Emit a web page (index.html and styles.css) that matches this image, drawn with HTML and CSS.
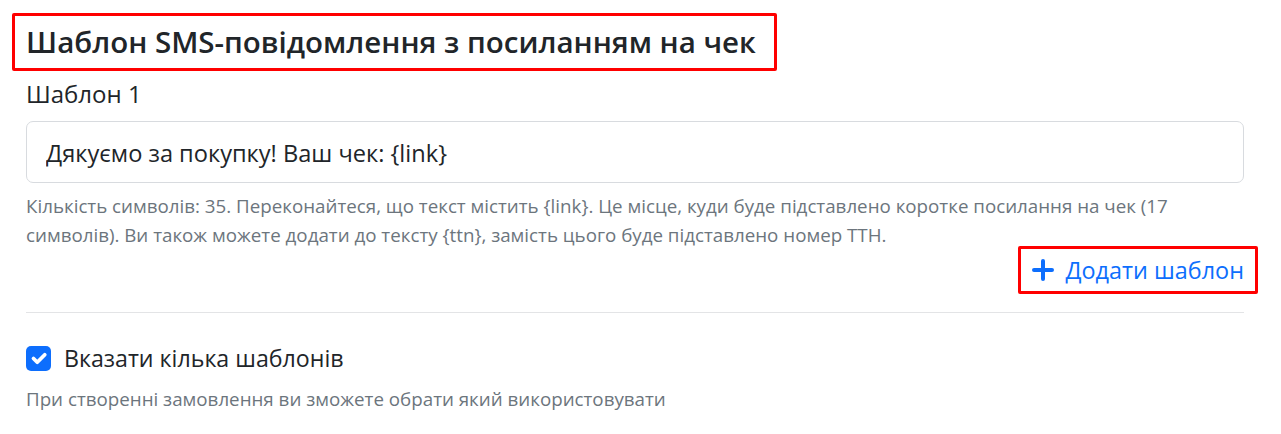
FILE: index.html
```html
<!DOCTYPE html>
<html lang="uk">
<head>
  <meta charset="UTF-8">
  <meta name="viewport" content="width=device-width, initial-scale=1.0">
  <title>Шаблон SMS</title>
  <link rel="stylesheet" href="styles.css">
</head>
<body>

  <div class="sms-settings">
    <h3 class="section-title"><span class="mark">Шаблон SMS-повідомлення з посиланням на чек</span></h3>

    <div class="template-group">
      <label class="template-label" for="template-1">Шаблон 1</label>
      <input type="text" class="template-input" id="template-1" value="Дякуємо за покупку! Ваш чек: {link}">
      <div class="help-text">Кількість символів: 35. Переконайтеся, що текст містить {link}. Це місце, куди буде підставлено коротке посилання на чек (17 символів). Ви також можете додати до тексту {ttn}, замість цього буде підставлено номер ТТН.</div>
    </div>

    <div class="add-row">
      <button class="add-button mark" type="button">
        <svg class="plus-icon" viewBox="0 0 22 22" width="22" height="22"><path d="M11 2v18M2 11h18" stroke="currentColor" stroke-width="4" stroke-linecap="round"/></svg>
        Додати шаблон
      </button>
    </div>

    <hr class="divider">

    <div class="check-row">
      <input type="checkbox" class="check-input" id="multi" checked>
      <label class="check-label" for="multi">Вказати кілька шаблонів</label>
    </div>
    <div class="help-text">При створенні замовлення ви зможете обрати який використовувати</div>
  </div>

</body>
</html>
```

FILE: styles.css
```css
/* page */
body {
  margin: 0;
  background: #fff;
  color: #212529;
  font-family: "Open Sans", "Noto Sans", sans-serif;
}

.sms-settings {
  width: 1218px;
  padding: 13px 0 0 26px;
}

/* red annotation frame */
.mark {
  border: 3px solid #f00;
  border-radius: 2px;
}

.section-title {
  margin: 0;
  font-size: 29.5px;
  font-weight: 600;
  line-height: 40px;
}

.section-title .mark {
  display: inline-block;
  margin-left: -14px;
  padding: 6px 18px 6px 11px;
}

.template-group {
  margin-top: 6px;
}

.template-label {
  display: block;
  font-size: 24px;
  line-height: 34px;
  margin-bottom: 10px;
}

.template-input {
  display: block;
  box-sizing: border-box;
  width: 100%;
  height: 62px;
  padding: 2px 19px 0;
  border: 1px solid #d8dbdf;
  border-radius: 7px;
  font-family: inherit;
  font-size: 23.6px;
  color: #212529;
  background: #fff;
}

.help-text {
  margin-top: 8px;
  font-size: 18.75px;
  line-height: 29px;
  color: #6c757d;
}

.add-row {
  display: flex;
  justify-content: flex-end;
  margin: -3px -14px 0 0;
}

.add-button {
  display: flex;
  align-items: center;
  gap: 12px;
  height: 48px;
  padding: 0 11px;
  background: transparent;
  color: #0d6efd;
  font-family: inherit;
  font-size: 23.4px;
  cursor: pointer;
}

.plus-icon {
  display: block;
}

.divider {
  margin: 18px 0 0;
  border: 0;
  border-top: 1px solid #e3e4e6;
}

.check-row {
  display: flex;
  align-items: center;
  gap: 13px;
  margin-top: 28px;
}

.check-input {
  appearance: none;
  flex: none;
  width: 25px;
  height: 25px;
  margin: 0;
  border-radius: 5px;
  background: #0d6efd url("data:image/svg+xml,%3csvg xmlns='http://www.w3.org/2000/svg' viewBox='0 0 20 20'%3e%3cpath fill='none' stroke='%23fff' stroke-linecap='round' stroke-linejoin='round' stroke-width='3' d='m6 10 3 3 6-6'/%3e%3c/svg%3e") center / 100% no-repeat;
}

.check-label {
  font-size: 23.2px;
  line-height: 34px;
}

.check-row + .help-text {
  margin-top: 9px;
}
```
